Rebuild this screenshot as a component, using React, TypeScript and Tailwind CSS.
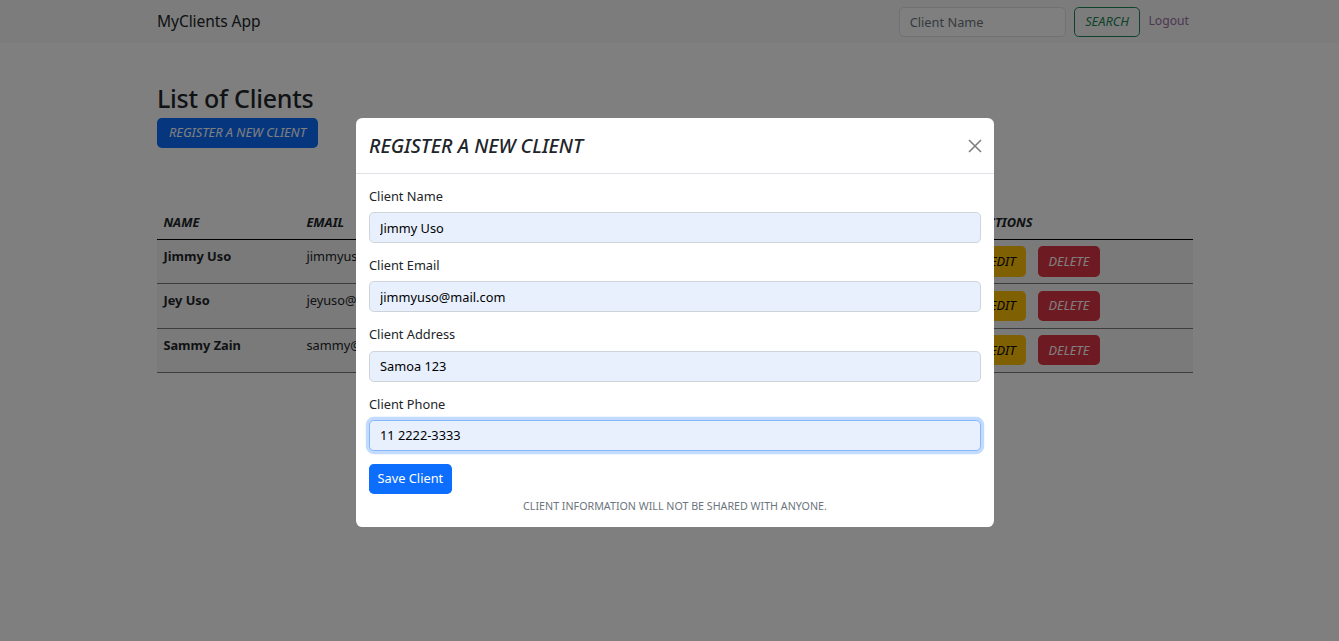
const clients = [
  { name: "Jimmy Uso", email: "jimmyuso@mail.com", phone: "11 2222-3333", address: "Samoa 123" },
  { name: "Jey Uso", email: "jeyuso@mail.com", phone: "11 4444-5555", address: "Samoa 456" },
  { name: "Sammy Zain", email: "sammy@mail.com", phone: "11 6666-7777", address: "Florida 789" },
];

const fields = [
  { label: "Client Name", value: "Jimmy Uso" },
  { label: "Client Email", value: "jimmyuso@mail.com" },
  { label: "Client Address", value: "Samoa 123" },
  { label: "Client Phone", value: "11 2222-3333", focused: true },
];

export default function App() {
  return (
    <div className="relative min-h-[641px] bg-white font-['Noto_Sans',sans-serif] text-[12.8px] leading-[1.5] text-[#212529]">
      {/* Navbar */}
      <nav className="h-[43px] bg-[#f8f9fa]">
        <div className="ml-[157px] flex h-full w-[1036px] items-center">
          <span className="text-[15.6px] tracking-[-0.1px] text-[#212529]">MyClients App</span>
          <div className="ml-auto mr-[4px] flex items-center">
            <input
              placeholder="Client Name"
              className="h-[30px] w-[167px] rounded-[4.8px] border border-[#dee2e6] bg-white px-[10px] text-[12.8px] placeholder:text-[#6c757d]"
            />
            <button className="ml-[8px] h-[30px] rounded-[4.8px] border border-[#198754] px-[10.5px] text-[12.8px] italic text-[#198754]">
              SEARCH
            </button>
            <span className="ml-[8px] text-[12.2px] text-[#9b6fa5]">Logout</span>
          </div>
        </div>
      </nav>

      {/* Page */}
      <div className="ml-[157px] w-[1036px] pt-[40px]">
        <h2 className="text-[25px] font-medium leading-[1.2] tracking-[-0.25px]">List of Clients</h2>
        <button className="mt-[5px] h-[30px] rounded-[4.8px] bg-[#0d6efd] px-[12px] text-[12.8px] italic text-white">
          REGISTER A NEW CLIENT
        </button>

        <table className="mt-[59px] w-full table-fixed border-collapse">
          <thead>
            <tr className="border-b border-black text-left italic">
              <th className="w-[143px] px-[6.4px] py-[6.4px] font-bold">NAME</th>
              <th className="w-[230px] px-[6.4px] py-[6.4px] font-bold">EMAIL</th>
              <th className="w-[200px] px-[6.4px] py-[6.4px] font-bold">PHONE</th>
              <th className="w-[243px] px-[6.4px] py-[6.4px] font-bold">ADDRESS</th>
              <th className="px-[6.4px] py-[6.4px] font-bold">ACTIONS</th>
            </tr>
          </thead>
          <tbody>
            {clients.map((c) => (
              <tr key={c.name} className="border-b border-[#7a7a7a] bg-[#f4f4f4] align-top">
                <td className="px-[6.4px] pb-[6.4px] pt-[7px] font-bold">{c.name}</td>
                <td className="px-[6.4px] pb-[6.4px] pt-[7px]">{c.email}</td>
                <td className="px-[6.4px] pb-[6.4px] pt-[7px]">{c.phone}</td>
                <td className="px-[6.4px] pb-[6.4px] pt-[7px]">{c.address}</td>
                <td className="px-[6.4px] pb-[6.4px] pt-[6.4px]">
                  <div className="flex gap-[12px]">
                    <button className="h-[30.5px] rounded-[4.8px] bg-[#ffc107] px-[10.5px] italic text-black">EDIT</button>
                    <button className="h-[30.5px] rounded-[4.8px] bg-[#dc3545] px-[10.5px] italic text-white">DELETE</button>
                  </div>
                </td>
              </tr>
            ))}
          </tbody>
        </table>
      </div>

      {/* Backdrop */}
      <div className="fixed inset-0 bg-black/50" />

      {/* Modal */}
      <div className="absolute left-[356px] top-[118px] w-[638px] rounded-[6.4px] bg-white">
        <div className="flex h-[56px] items-center border-b border-[#dee2e6] px-[13px]">
          <h4 className="text-[19.6px] font-medium italic">REGISTER A NEW CLIENT</h4>
          <svg className="ml-auto mr-[-1px]" width="14" height="14" viewBox="0 0 14 14" fill="none">
            <path d="M1 1L13 13M13 1L1 13" stroke="#000" strokeOpacity="0.5" strokeWidth="1.6" />
          </svg>
        </div>
        <div className="px-[13px] pb-[13px] pt-[13px]">
          {fields.map((f) => (
            <div key={f.label} className="mb-[13px]">
              <label className="mb-[6px] block">{f.label}</label>
              <input
                readOnly
                value={f.value}
                className={
                  f.focused
                    ? "h-[31px] w-full rounded-[4.8px] border border-[#86b7fe] bg-[#e8f0fe] px-[10px] text-[12.8px] text-black shadow-[0_0_0_3.2px_rgba(13,110,253,0.25)] outline-none"
                    : "h-[31px] w-full rounded-[4.8px] border border-[#ced4da] bg-[#e8f0fe] px-[10px] text-[12.8px] text-black outline-none"
                }
              />
            </div>
          ))}
          <button className="h-[30.5px] rounded-[4.8px] bg-[#0d6efd] px-[8.5px] text-[12.8px] text-white">Save Client</button>
          <p className="mt-[3.5px] text-center text-[10.7px] text-[#6c757d]">
            CLIENT INFORMATION WILL NOT BE SHARED WITH ANYONE.
          </p>
        </div>
      </div>
    </div>
  );
}
